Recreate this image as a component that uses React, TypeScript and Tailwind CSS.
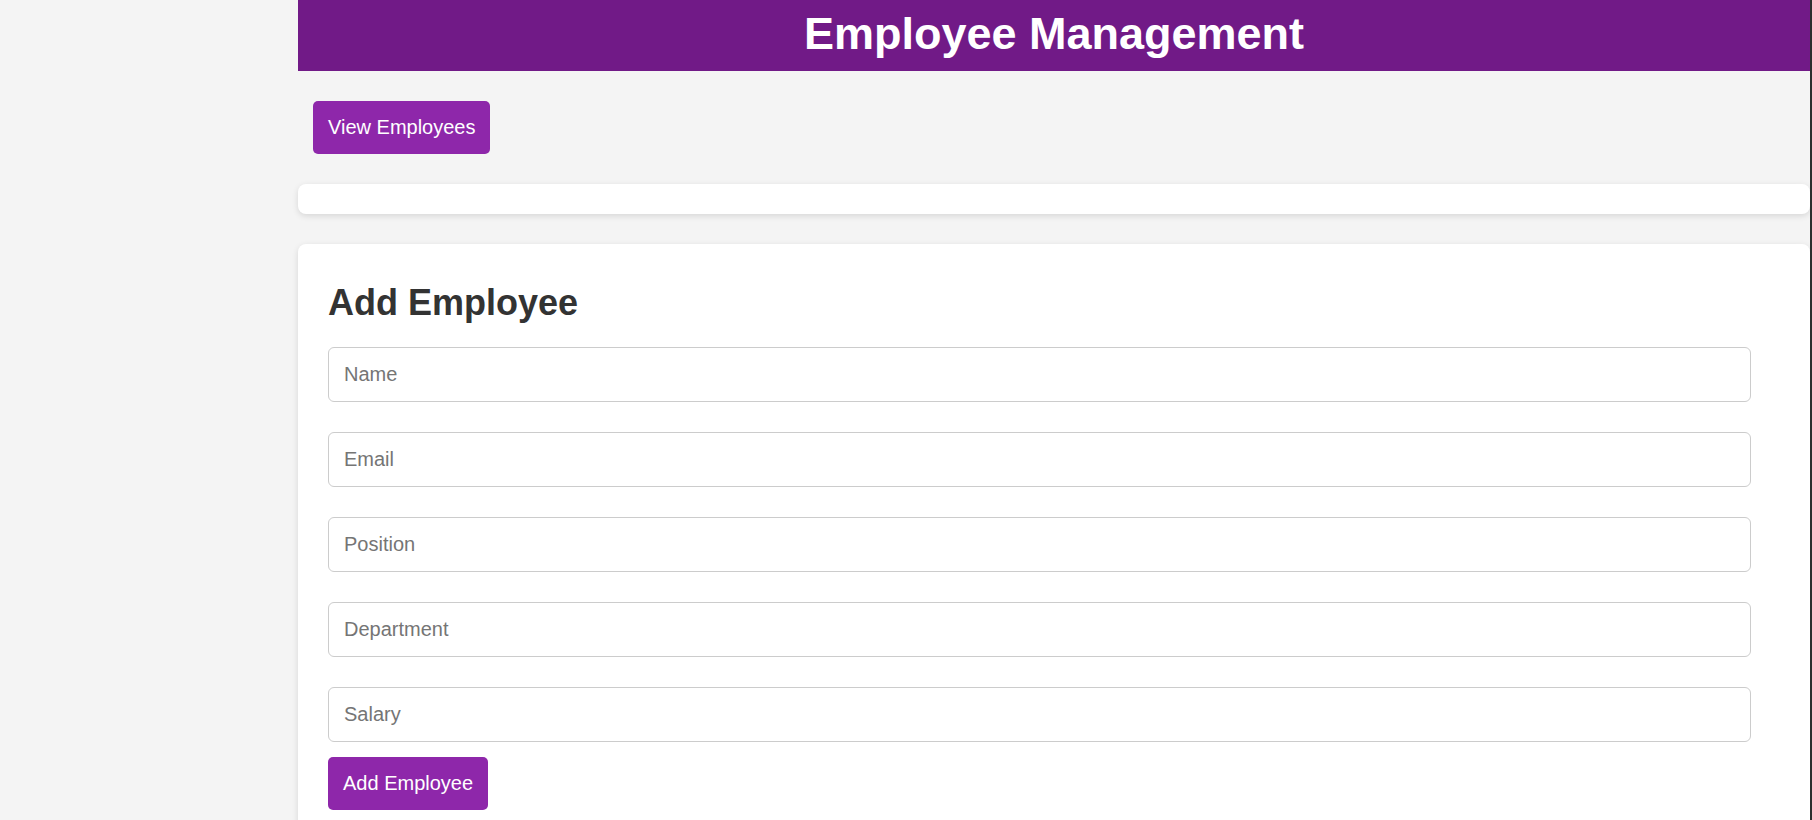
import React from 'react';

const fields = ['Name', 'Email', 'Position', 'Department', 'Salary'];

const App: React.FC = () => {
    return (
        <div className="flex min-h-[820px] bg-[#f4f4f4] font-['Liberation_Sans',Arial,sans-serif]">
            {/* empty left gutter */}
            <div className="w-[298px] shrink-0" />

            <div className="flex-1 min-w-0">
                <header className="h-[71px] bg-[#711a87] text-center">
                    <h1 className="text-[45px] font-bold leading-[68px] text-white">Employee Management</h1>
                </header>

                <div className="pt-[30px] pl-[15px]">
                    <button className="px-[15px] py-[15px] text-[20px] leading-[23px] text-white bg-[#8e27aa] rounded-[5px]">
                        View Employees
                    </button>
                </div>

                <div className="mt-[30px] h-[30px] bg-white rounded-[8px] shadow-[0_2px_6px_rgba(0,0,0,0.12)]" />

                <div className="mt-[30px] bg-white rounded-[8px] shadow-[0_2px_6px_rgba(0,0,0,0.12)] pt-[38px] pb-[30px] pl-[30px] pr-[59px]">
                    <h2 className="text-[36px] font-bold leading-[42px] text-[#333] mb-[23px]">Add Employee</h2>
                    <div className="flex flex-col gap-[30px]">
                        {fields.map((f) => (
                            <input
                                key={f}
                                placeholder={f}
                                className="w-full h-[55px] px-[15px] text-[20px] border border-[#ccc] rounded-[6px] placeholder:text-[#757575] outline-none"
                            />
                        ))}
                    </div>
                    <button className="mt-[15px] px-[15px] py-[15px] text-[20px] leading-[23px] text-white bg-[#8e27aa] rounded-[5px]">
                        Add Employee
                    </button>
                </div>
            </div>

            <div className="w-[2px] shrink-0 bg-[#2e2e2e]" />
        </div>
    );
};

export default App;
